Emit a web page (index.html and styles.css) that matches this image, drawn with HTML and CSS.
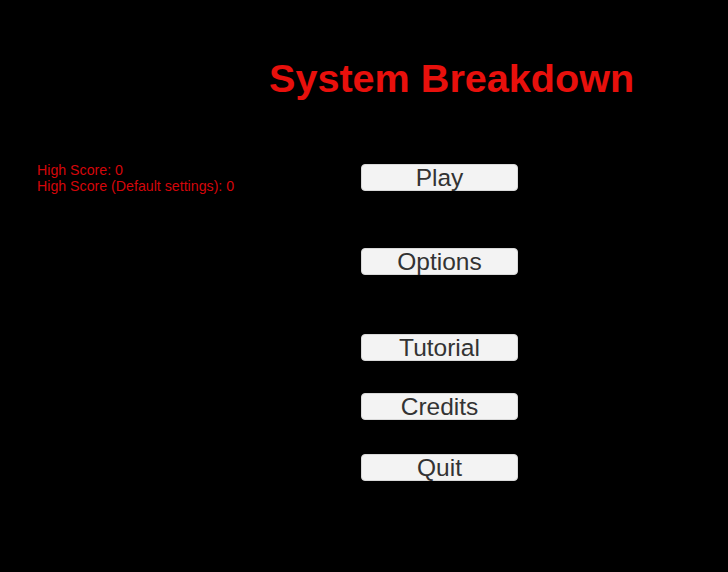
FILE: index.html
```html
<!DOCTYPE html>
<html>
<head>
<meta charset="utf-8">
<link rel="stylesheet" href="styles.css">
</head>
<body>
<div class="screen">
  <h1 class="title">System Breakdown</h1>
  <div class="main">
    <div class="scores">
      <div>High Score: 0</div>
      <div>High Score (Default settings): 0</div>
    </div>
    <div class="menu">
      <button class="btn b-play">Play</button>
      <button class="btn b-options">Options</button>
      <button class="btn b-tutorial">Tutorial</button>
      <button class="btn b-credits">Credits</button>
      <button class="btn b-quit">Quit</button>
    </div>
  </div>
</div>
</body>
</html>
```
FILE: styles.css
```css
html, body {
  margin: 0;
  padding: 0;
  background: #000;
}
.screen {
  width: 728px;
  height: 572px;
  background: #000;
  font-family: "Liberation Sans", Arial, sans-serif;
  overflow: hidden;
}
.title {
  margin: 0;
  padding: 58px 0 0 269px;
  font-size: 39.6px;
  line-height: 40px;
  font-weight: bold;
  color: #e8100c;
}
.main {
  display: flex;
  padding-top: 66px;
}
.scores {
  width: 324px;
  padding-left: 37px;
  font-size: 14.2px;
  line-height: 16px;
  color: #d4060a;
  margin-top: -2px;
}
.menu {
  display: flex;
  flex-direction: column;
  width: 157px;
}
.btn {
  display: block;
  width: 157px;
  height: 27px;
  padding: 0;
  margin: 0;
  border: 1px solid #d8d8d8;
  border-radius: 4px;
  background: #f3f3f3;
  color: #333;
  font-family: "Liberation Sans", Arial, sans-serif;
  font-size: 24.5px;
  line-height: 25px;
  text-align: center;
}
.b-options { margin-top: 57px; }
.b-tutorial { margin-top: 59px; }
.b-credits { margin-top: 32px; }
.b-quit { margin-top: 34px; }
```
